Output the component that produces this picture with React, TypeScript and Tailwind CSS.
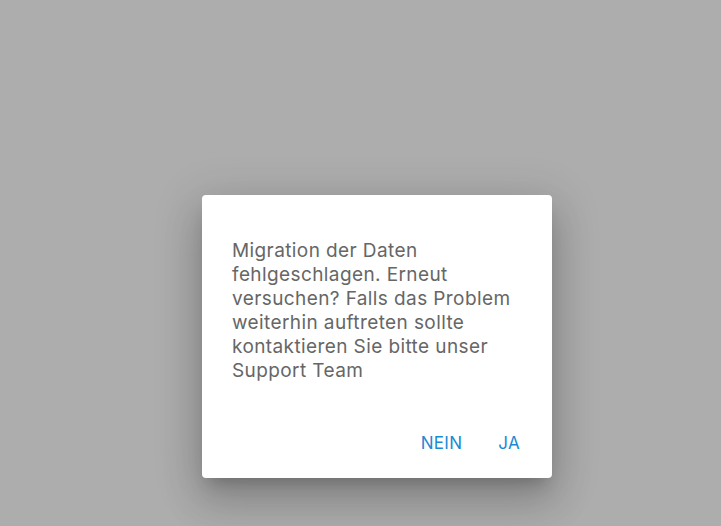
export default function App() {
  return (
    <div className="h-[526px] w-full overflow-hidden bg-[#adadad] pl-[202px] pt-[195px] font-['Inter',sans-serif]">
      <div className="flex h-[283px] w-[350px] flex-col rounded bg-white shadow-[0_11px_15px_-7px_rgba(0,0,0,0.2),0_24px_38px_3px_rgba(0,0,0,0.14),0_9px_46px_8px_rgba(0,0,0,0.12)]">
        <p className="px-[30px] pt-[44px] text-[19px] leading-[24px] tracking-[0.4px] text-[#666666]">
          Migration der Daten fehlgeschlagen. Erneut versuchen? Falls das Problem weiterhin auftreten sollte
          kontaktieren Sie bitte unser Support Team
        </p>
        <div className="mt-auto flex justify-end gap-[20px] pb-[17px] pr-[24px]">
          <button className="px-2 py-2 text-[17px] leading-[20px] tracking-[0.3px] text-[#1b8ad3]">NEIN</button>
          <button className="px-2 py-2 text-[17px] leading-[20px] tracking-[0.3px] text-[#1b8ad3]">JA</button>
        </div>
      </div>
    </div>
  );
}
